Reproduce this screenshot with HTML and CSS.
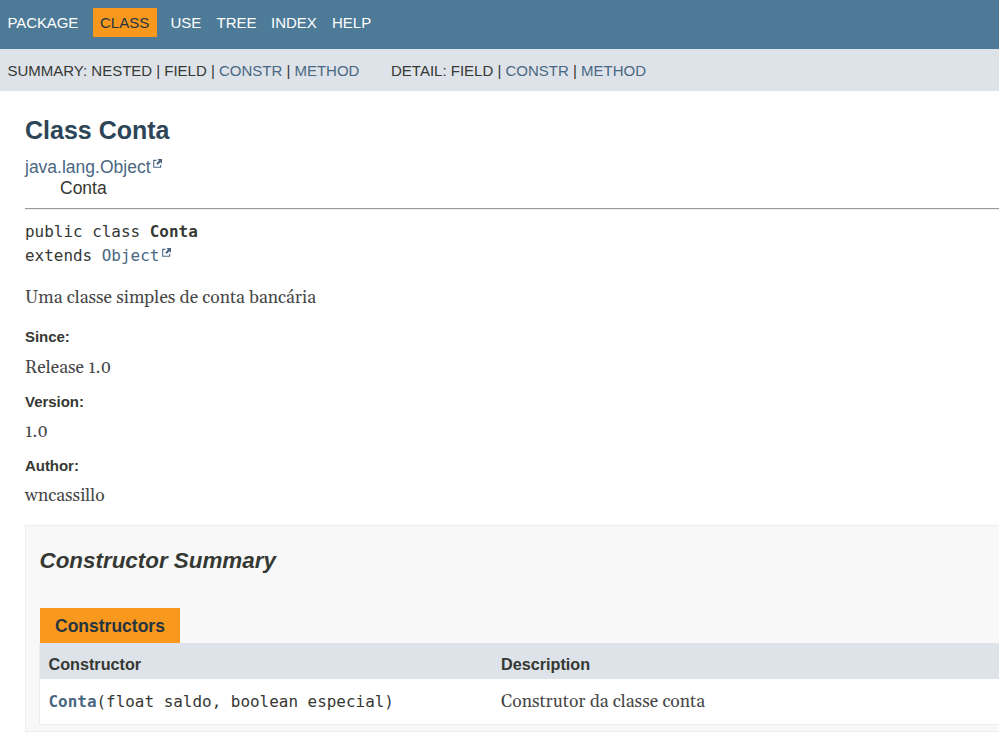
FILE: index.html
```html
<!DOCTYPE html>
<html lang="pt">
<head>
<meta charset="utf-8">
<title>Conta</title>
<link rel="stylesheet" href="styles.css">
</head>
<body>
<header>
<nav class="top-nav">
<a class="package">PACKAGE</a><span class="current">CLASS</span><a class="use">USE</a><a class="tree">TREE</a><a class="index">INDEX</a><a>HELP</a>
</nav>
<div class="sub-nav">
<div class="summary-links">SUMMARY: NESTED | FIELD | <a>CONSTR</a> | <a>METHOD</a></div>
<div class="detail-links">DETAIL: FIELD | <a>CONSTR</a> | <a>METHOD</a></div>
</div>
</header>
<main>
<h1>Class Conta</h1>
<div class="inheritance"><a>java.lang.Object<svg class="ext" viewBox="0 0 10 10"><path d="M3.8 1.5H.8V9.2H8.5V6.5"/><path class="head" d="M4.8 0H10v5.2L8.3 3.5 5.2 6.6 3.6 5 6.6 1.8z"/></svg></a></div>
<div class="inheritance child">Conta</div>
<hr>
<div class="signature">public class <b>Conta</b><br>extends <a>Object<svg class="ext" viewBox="0 0 10 10"><path d="M3.8 1.5H.8V9.2H8.5V6.5"/><path class="head" d="M4.8 0H10v5.2L8.3 3.5 5.2 6.6 3.6 5 6.6 1.8z"/></svg></a></div>
<p class="serif intro">Uma classe simples de conta bancária</p>
<dl>
<dt>Since:</dt><dd class="serif release">Release 1.0</dd>
<dt>Version:</dt><dd class="serif version">1.0</dd>
<dt>Author:</dt><dd class="serif author">wncassillo</dd>
</dl>
<section>
<h2>Constructor Summary</h2>
<div class="caption">Constructors</div>
<div class="table">
<div class="row heading"><div>Constructor</div><div>Description</div></div>
<div class="row"><div class="code"><a>Conta</a>(float saldo, boolean especial)</div><div class="serif desc">Construtor da classe conta</div></div>
</div>
</section>
</main>
</body>
</html>
```
FILE: styles.css
```css
* { box-sizing: border-box; }
body { margin: 0; background: #fff; color: #353833; font-family: "Liberation Sans", Arial, sans-serif; overflow: hidden; }
a { color: #4a6782; text-decoration: none; }
.top-nav { height: 49px; padding: 8px 0 0 7.5px; background: #4d7a97; display: flex; font-size: 15px; line-height: 29px; }
.top-nav a { color: #fff; }
.package { width: 85.5px; letter-spacing: -.1px; }
.current { width: 64px; height: 29px; padding-left: 7px; background: #f8981d; color: #253441; }
.use { width: 59.5px; padding-left: 13.5px; }
.tree { width: 54.5px; }
.index { width: 61px; }
.sub-nav { height: 42px; padding-left: 7.5px; background: #dee3e9; display: flex; font-size: 15px; line-height: 44px; white-space: nowrap; }
.summary-links { width: 383.5px; letter-spacing: -.01px; }
main { padding-left: 25px; }
h1 { margin: 0; padding-top: 24px; height: 66px; font-size: 25px; line-height: 31px; color: #2c4557; }
.inheritance { font-size: 17.5px; line-height: 21px; height: 21px; }
.child { padding-left: 35px; }
.ext { width: 9px; height: 9px; margin-left: 2px; vertical-align: 5px; overflow: visible; }
.signature .ext { margin-left: 2.8px; vertical-align: 4.5px; }
.ext path { fill: none; stroke: #4a6782; stroke-width: 1.2; }
.ext .head { fill: #4a6782; stroke: none; }
hr { margin: 9px 0 0; height: 2px; border: 0; border-top: 1px solid #999; border-bottom: 1px solid #eee; }
.signature { margin-top: 10px; font: 15.95px/24px "DejaVu Sans Mono", monospace; height: 48px; }
.serif { font-family: Georgia, Gelasio, "Liberation Serif", serif; font-size: 17.5px; line-height: 24px; color: #474747; }
.intro { margin: 18px 0 0; height: 24px; }
dl { margin: 0; padding-top: 17px; height: 215px; }
dt { font-size: 15px; font-weight: bold; line-height: 20px; height: 20px; letter-spacing: -.04px; }
dd { margin: 8px 0 12.5px; height: 24px; }
.release { line-height: 26px; }
section { height: 207px; border: 1px solid #ededed; border-right: 0; background: #f8f8f8; padding: 19px 0 0 14px; }
h2 { margin: 0 0 0 -.5px; font-size: 22.4px; font-style: italic; line-height: 32px; height: 63px; }
.caption { width: 140px; height: 35px; padding-left: 15px; background: #f8981d; color: #253441; font-size: 17.5px; font-weight: bold; line-height: 36px; }
.table { border: solid #eee; border-width: 0 0 1px 1px; margin-left: -1px; height: 82px; background: #fff; }
.row { display: grid; grid-template-columns: 452.5px 1fr; padding-left: 8.5px; line-height: 45px; height: 45px; }
.heading { background: #dee3e9; font-size: 16.2px; font-weight: bold; line-height: 42px; height: 36px; }
.code { font-family: "DejaVu Sans Mono", monospace; font-size: 15.95px; }
.code a { font-weight: bold; }
.desc { line-height: 46px; }
```
